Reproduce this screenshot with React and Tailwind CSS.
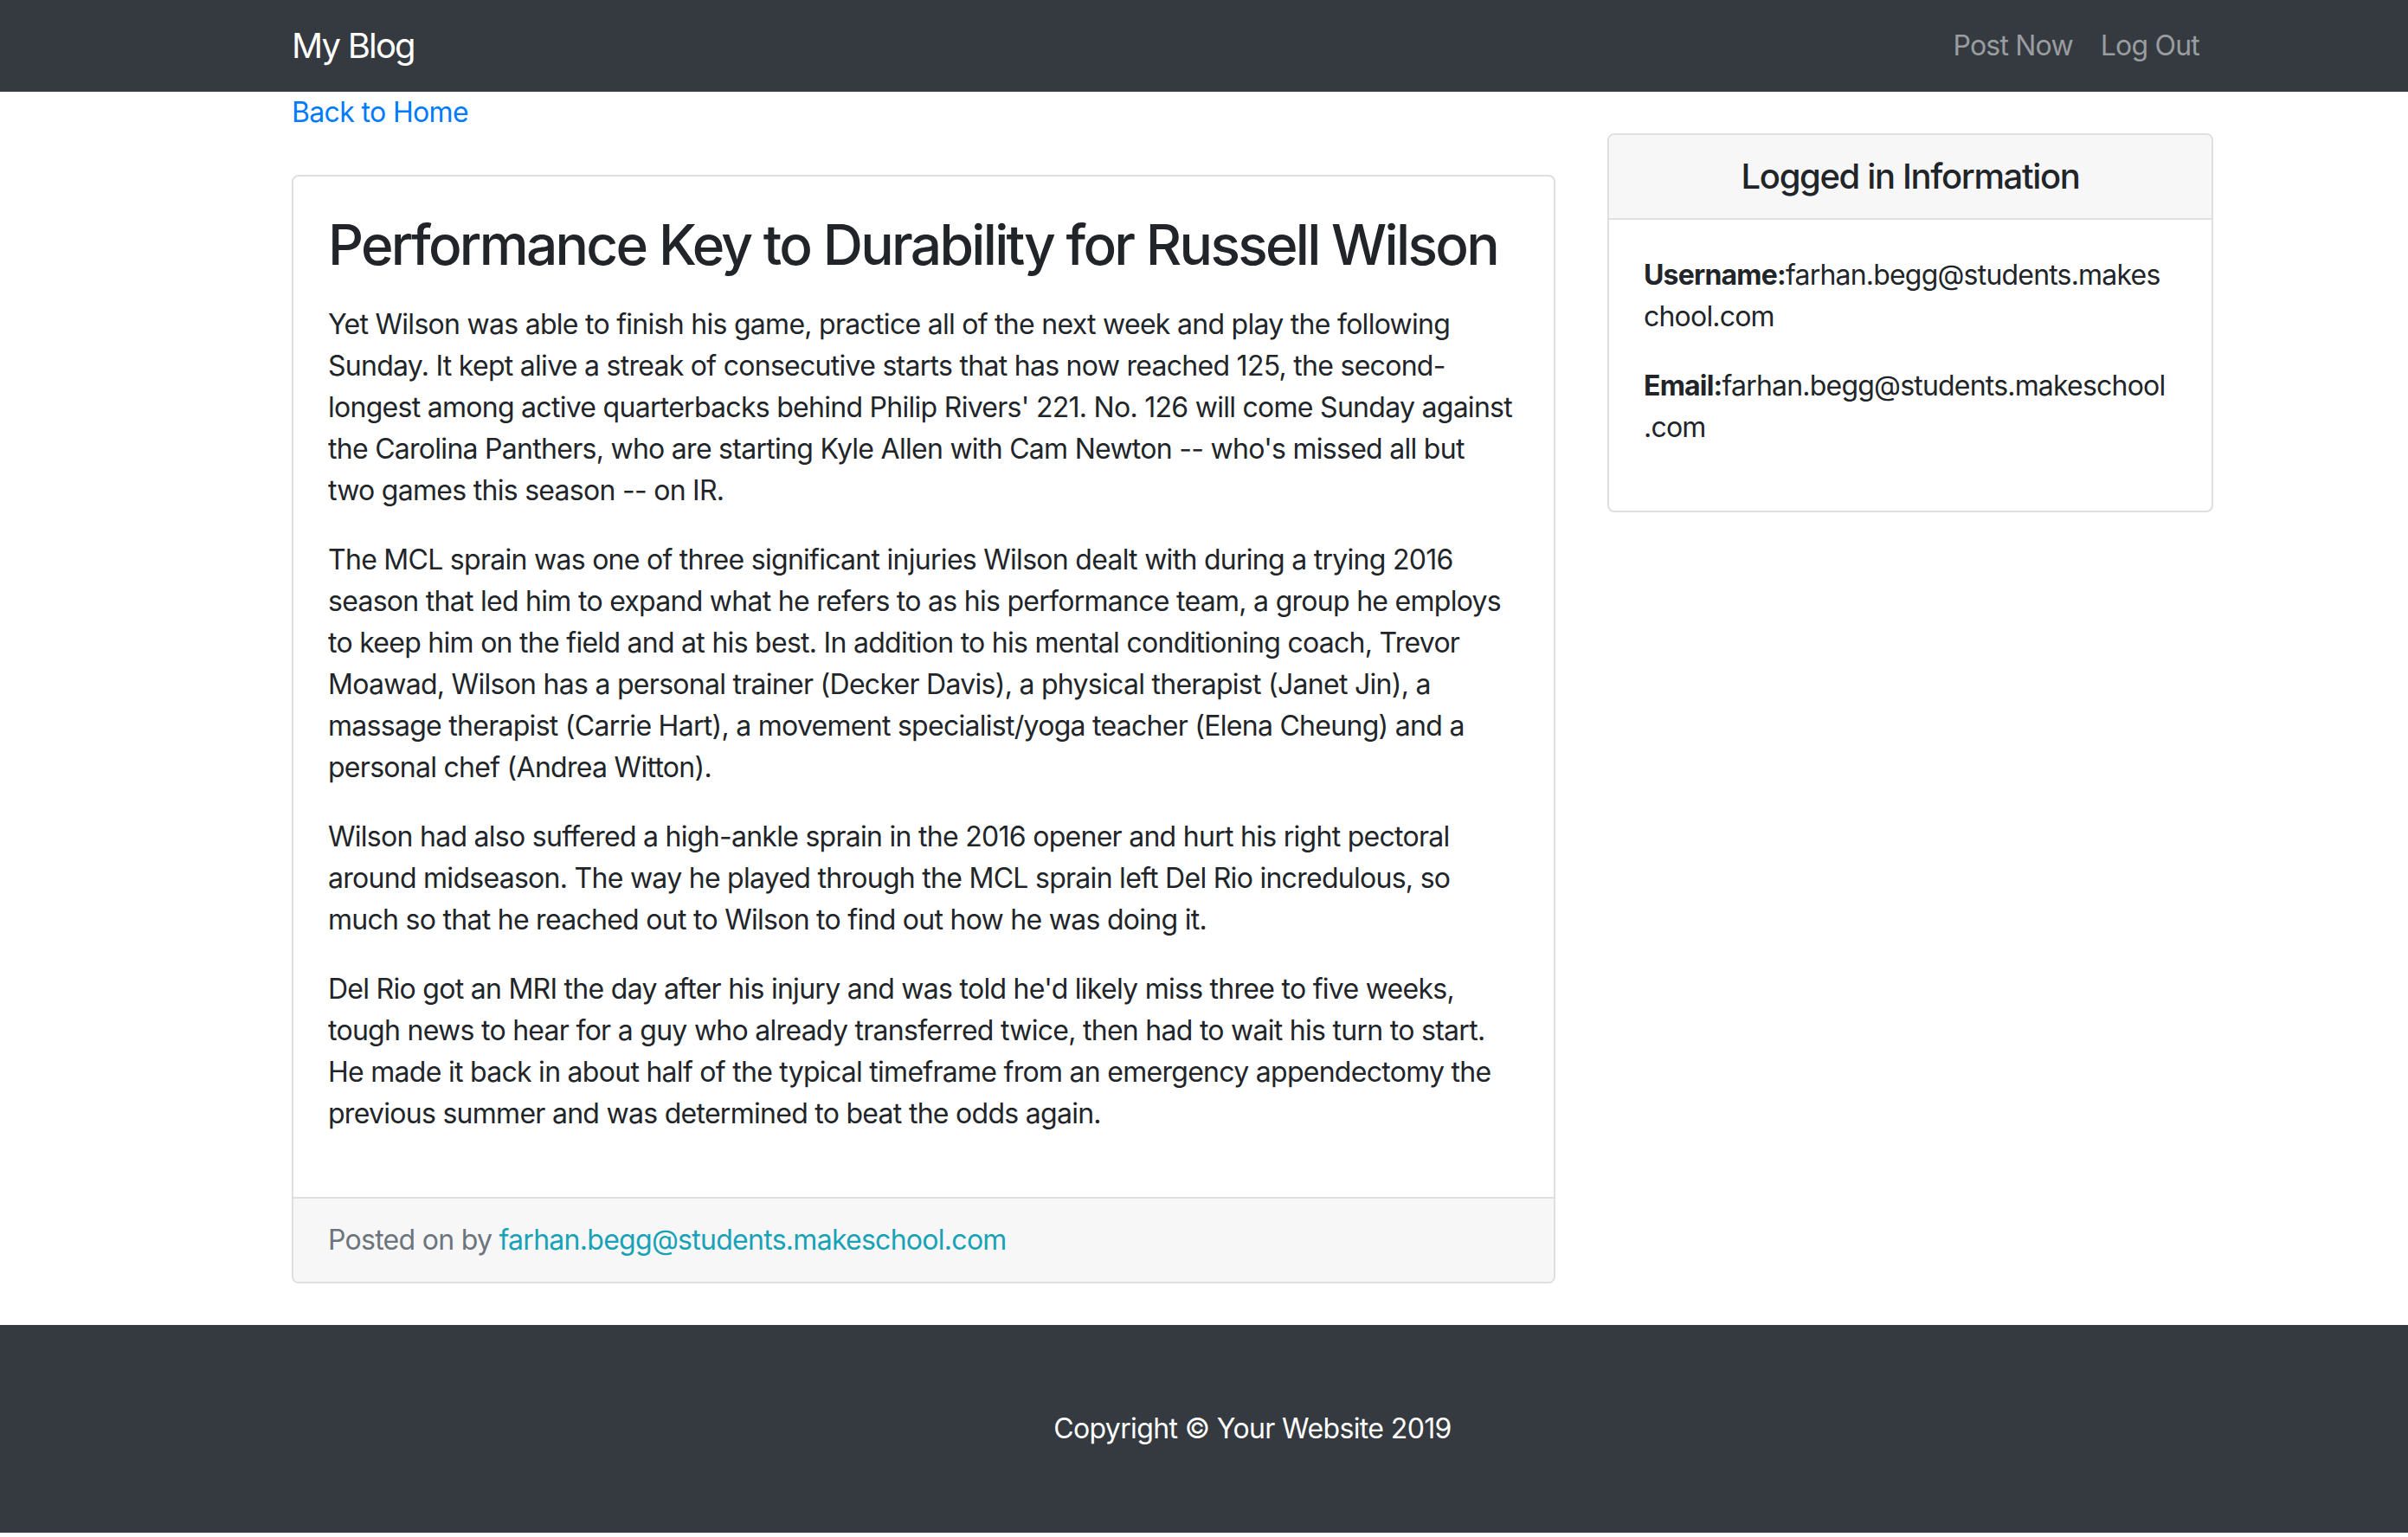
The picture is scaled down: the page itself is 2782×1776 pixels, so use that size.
import React from "react";

const paragraphs = [
  "Yet Wilson was able to finish his game, practice all of the next week and play the following Sunday. It kept alive a streak of consecutive starts that has now reached 125, the second-longest among active quarterbacks behind Philip Rivers' 221. No. 126 will come Sunday against the Carolina Panthers, who are starting Kyle Allen with Cam Newton -- who's missed all but two\u00a0games this season -- on IR.",
  "The MCL sprain was one of three significant injuries Wilson dealt with during a trying 2016 season that led him to expand what he refers to as his performance team, a group he employs to keep him on the field and at his best. In addition to his mental conditioning coach, Trevor Moawad, Wilson has a personal trainer (Decker Davis), a physical therapist (Janet Jin), a massage therapist (Carrie Hart), a movement specialist/yoga teacher (Elena Cheung) and a personal chef (Andrea Witton).",
  "Wilson had also suffered a high-ankle sprain in the 2016 opener and hurt his right pectoral around midseason. The way he played through the MCL sprain left Del Rio incredulous, so much so that he reached out to Wilson to find out how he was doing it.",
  "Del Rio got an MRI the day after his injury and was told he'd likely miss three to five weeks, tough news to hear for a guy who already transferred twice, then had to wait his turn to start. He made it back in about half of the typical timeframe from an emergency appendectomy the previous summer and was determined to beat the odds again.",
];

const email = "farhan.begg@students.makeschool.com";

function Navbar() {
  return (
    <nav className="h-[106px] bg-[#343a40]">
      <div className="ml-[337px] flex h-full w-[2220px] items-center justify-between">
        <a href="#" className="text-[40px] leading-[60px] tracking-[-0.045em] text-white">
          My Blog
        </a>
        <div className="flex">
          <a href="#" className="px-4 text-[32px] leading-[48px] tracking-[-0.025em] text-[#9a9da0]">
            Post Now
          </a>
          <a href="#" className="px-4 text-[32px] leading-[48px] tracking-[-0.025em] text-[#9a9da0]">
            Log Out
          </a>
        </div>
      </div>
    </nav>
  );
}

function PostCard() {
  return (
    <div className="mt-[48px] mb-[48px] overflow-hidden rounded-[8px] border-2 border-[#dfdfdf]">
      <div className="px-[40px] pt-[40px] pb-[40px]">
        <h2 className="mb-[30px] text-[64px] leading-[77px] font-medium tracking-[-0.042em] text-[#212529]">
          Performance Key to Durability for Russell Wilson
        </h2>
        {paragraphs.map((text, index) => (
          <p key={index} className="mb-[32px] text-[32px] leading-[48px] tracking-[-0.72px]">
            {text}
          </p>
        ))}
      </div>
      <div className="border-t-2 border-[#dfdfdf] bg-[#f7f7f7] px-[40px] py-[24px] text-[32px] leading-[48px] tracking-[-0.72px] text-[#6c757d]">
        Posted on by{" "}
        <a href="#" className="text-[#17a2b8]">
          {email}
        </a>
      </div>
    </div>
  );
}

function InfoCard() {
  return (
    <div className="mt-[48px] overflow-hidden rounded-[8px] border-2 border-[#dfdfdf]">
      <div className="border-b-2 border-[#dfdfdf] bg-[#f7f7f7] px-[40px] py-[24px] text-center">
        <h5 className="text-[40px] leading-[48px] font-medium tracking-[-0.034em]">Logged in Information</h5>
      </div>
      <div className="p-[40px] text-[32px] leading-[48px] tracking-[-0.025em]">
        <p className="mb-[32px] whitespace-nowrap">
          <b className="font-bold">Username:</b>
          farhan.begg@students.makes
          <br />
          chool.com
        </p>
        <p className="mb-[32px] whitespace-nowrap">
          <b className="font-bold">Email:</b>
          farhan.begg@students.makeschool
          <br />
          .com
        </p>
      </div>
    </div>
  );
}

export default function App() {
  return (
    <div className="min-h-screen bg-white font-['Inter',sans-serif] text-[#212529]">
      <Navbar />
      <div className="ml-[337px] flex w-[2220px] gap-[60px]">
        <div className="w-[1460px]">
          <a href="#" className="block text-[32px] leading-[48px] tracking-[-0.65px] text-[#007bff]">
            Back to Home
          </a>
          <PostCard />
        </div>
        <div className="w-[700px]">
          <InfoCard />
        </div>
      </div>
      <footer className="bg-[#343a40] py-[96px]">
        <p className="ml-[337px] w-[2220px] text-center text-[32px] leading-[48px] tracking-[-0.62px] text-white">
          Copyright © Your Website 2019
        </p>
      </footer>
    </div>
  );
}
